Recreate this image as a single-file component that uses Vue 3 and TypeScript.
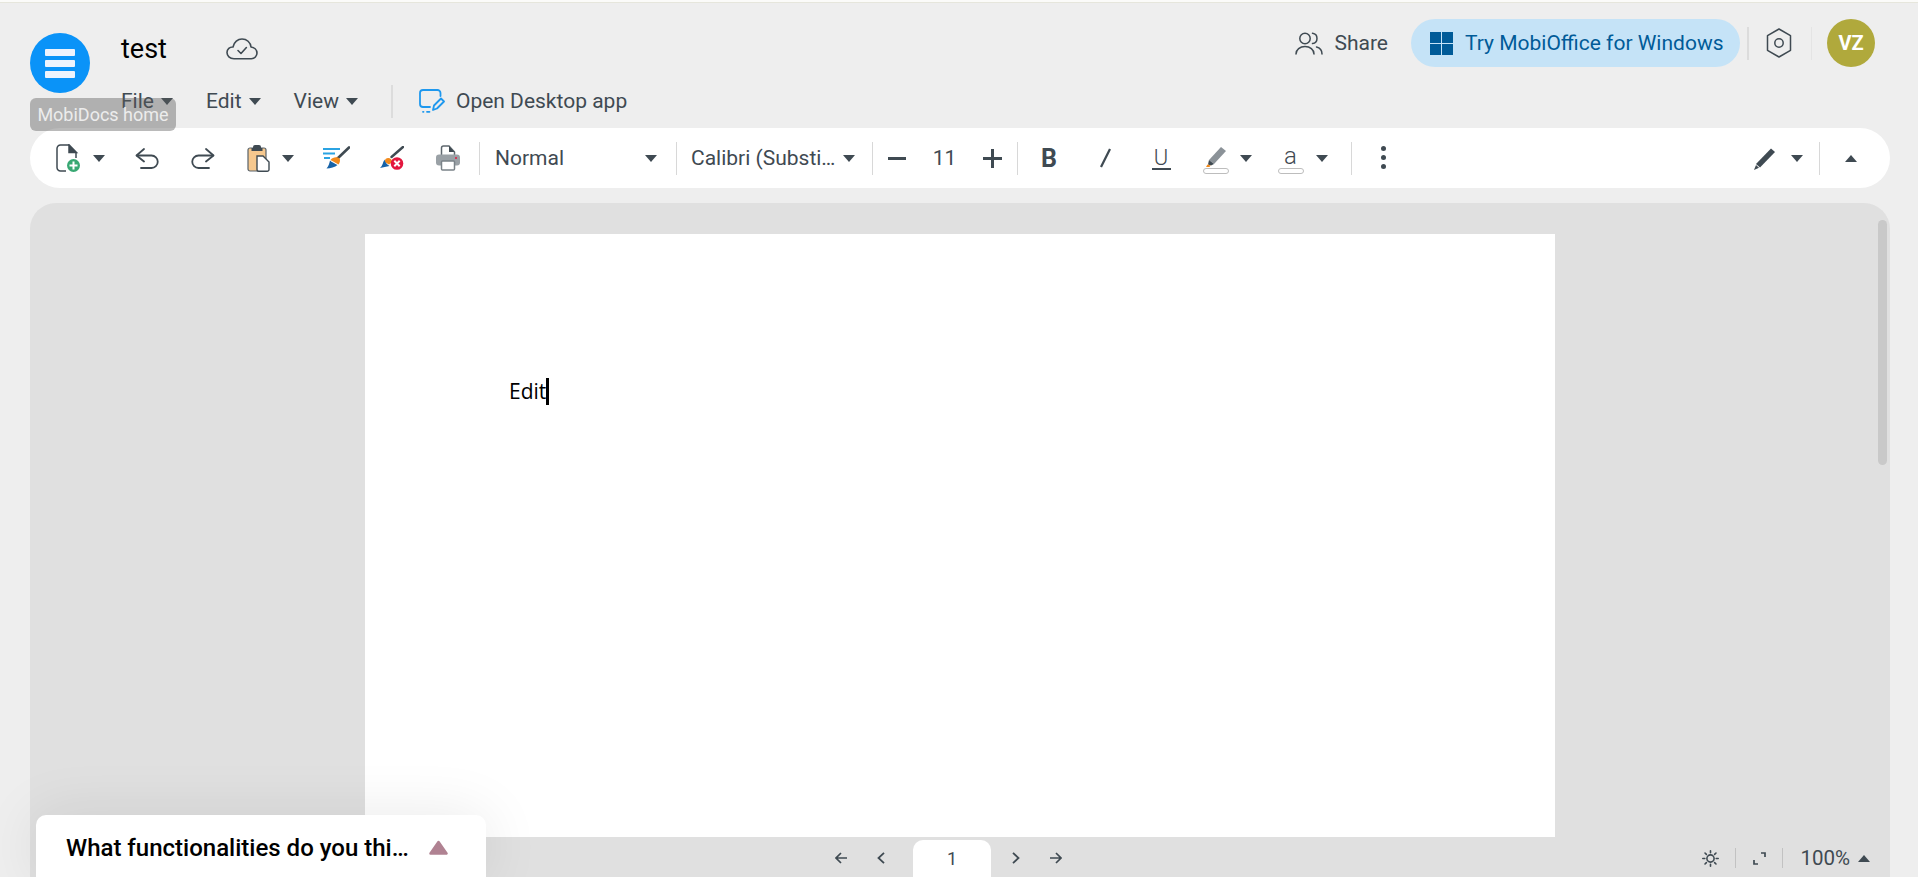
<script setup lang="ts">
const menus = ['File', 'Edit', 'View'];
</script>

<template>
  <div class="app">
    <div class="topline"></div>
    <div class="main">
      <header class="header">
        <button class="logo">
          <span></span><span></span><span></span>
        </button>
        <div class="tooltip">MobiDocs home</div>

        <div class="doc-info">
          <div class="title-row">
            <span class="title">test</span>
            <svg width="32" height="22" viewBox="0 0 32 22" fill="none" stroke="#3f4a52" stroke-width="1.6" stroke-linejoin="round" stroke-linecap="round">
              <path d="M8 20.7C3.7 20.7 1 17.8 1 14.6 1 11.2 3.8 8.7 7 9 8 4.2 11.8 1 16 1c4.8 0 8.5 3.4 9 8 3.5.4 6 3 6 6.1 0 3-2.4 5.6-5.6 5.6z" />
              <path d="M12 12.5l3 3 5.4-6" />
            </svg>
          </div>
          <nav class="menu-row">
            <span v-for="m in menus" :key="m" class="menu">{{ m }}<i class="caret"></i></span>
            <span class="menu-sep"></span>
            <svg class="open-icon" width="26" height="24" viewBox="0 0 26 24" fill="none" stroke="#1e98ee" stroke-width="1.8" stroke-linecap="round" stroke-linejoin="round">
              <path d="M21.5 7V4a3 3 0 0 0-3-3H4a3 3 0 0 0-3 3v11a3 3 0 0 0 3 3h7" />
              <path d="M14 21l1-4.500 7-7 3 3-7 7z" />
              <path d="M8 22.800h2.500M4 22.800h.5" />
            </svg>
            <span class="open-label">Open Desktop app</span>
          </nav>
        </div>

        <div class="header-right">
          <svg width="28" height="23" viewBox="0 0 28 23" fill="none" stroke="#3f4a52" stroke-width="1.5" stroke-linecap="round">
            <circle cx="10" cy="6.500" r="5.200" />
            <path d="M1 22c0-4.500 4-7.500 9-7.500s9 3 9 7.500" />
            <path d="M17.500 1.300a5.200 5.200 0 0 1 0 10.300" />
            <path d="M21.500 15c3.300.8 5.500 3.500 5.500 7" />
          </svg>
          <span class="share">Share</span>
          <button class="try-pill">
            <span class="win"><i></i><i></i><i></i><i></i></span>
            Try MobiOffice for Windows
          </button>
          <span class="head-sep"></span>
          <svg class="hex" width="26" height="30" viewBox="0 0 26 30" fill="none" stroke="#3f4a52" stroke-width="1.500" stroke-linejoin="round">
            <path d="M13 1l11.500 6.700v14.600L13 29 1.500 22.300V7.700z" />
            <circle cx="13" cy="15" r="4.200" />
          </svg>
          <span class="head-sep light"></span>
          <span class="avatar">VZ</span>
        </div>
      </header>

      <div class="toolbar">
        <span class="tool w48 first">
          <svg width="24" height="28" viewBox="0 0 24 28" fill="none" stroke="#3f4a52" stroke-width="1.500">
            <path d="M13 1H4.500A3.500 3.500 0 0 0 1 4.500v19A3.500 3.500 0 0 0 4.500 27H10" />
            <path d="M20 8.500V14" />
            <path d="M13 .8l7.500 7.700H13z" fill="#3f4a52" />
            <circle cx="17.500" cy="21.500" r="6.500" fill="#38a873" stroke="none" />
            <path d="M17.500 17.500v8M13.500 21.500h8" stroke="#fff" stroke-width="2" />
          </svg>
        </span>
        <i class="caret c-new"></i>
        <span class="tool">
          <svg width="24" height="21" viewBox="0 0 24 21" fill="none" stroke="#3f4a52" stroke-width="1.800" stroke-linecap="round" stroke-linejoin="round">
            <path d="M9 1L1.500 7.500 9 13.500" />
            <path d="M2 7.500h14.500a6.200 6.200 0 0 1 0 12.500H6" />
          </svg>
        </span>
        <span class="tool">
          <svg width="24" height="21" viewBox="0 0 24 21" fill="none" stroke="#3f4a52" stroke-width="1.800" stroke-linecap="round" stroke-linejoin="round">
            <path d="M15 1l7.500 6.500L15 13.500" />
            <path d="M22 7.500H7.500a6.200 6.200 0 0 0 0 12.500H18" />
          </svg>
        </span>
        <span class="tool w48 paste">
          <svg width="23" height="28" viewBox="0 0 23 28">
            <path d="M3 4h14a2 2 0 0 1 2 2v19a2 2 0 0 1-2 2H3a2 2 0 0 1-2-2V6a2 2 0 0 1 2-2z" fill="#f6c88e" stroke="#59636a" stroke-width="1.200" />
            <path d="M6 3a2 2 0 0 1 2-2h4a2 2 0 0 1 2 2v1h1.500v3h-11V4H6z" fill="#3f4a52" />
            <path d="M10 12h6l6 6v7.500a1.800 1.800 0 0 1-1.800 1.800H11.800a1.800 1.800 0 0 1-1.800-1.800z" fill="#fff" stroke="#3f4a52" stroke-width="1.400" />
          </svg>
        </span>
        <i class="caret"></i>
        <span class="tool painter">
          <svg width="27" height="24" viewBox="0 0 27 24" fill="none">
            <path d="M0 3h17M0 7.500h12M1 12h6" stroke="#2ba3e2" stroke-width="1.800" />
            <path d="M26 1.500L14.500 12.500" stroke="#3f4a52" stroke-width="2.600" stroke-linecap="round" />
            <path d="M7.500 14c2-3 7-3.500 9-1.500 1 1.500.5 4-1 6z" fill="#f28a1c" />
            <path d="M7 14.500c1.500 1.500 5 3 7.500 4.500-2.500 2-7 3.500-11 3.500 2-2 3-5.500 3.500-8z" fill="#1763a8" />
          </svg>
        </span>
        <span class="tool">
          <svg width="24" height="24" viewBox="0 0 24 24" fill="none">
            <path d="M23 1L11.500 11" stroke="#3f4a52" stroke-width="2.400" stroke-linecap="round" />
            <path d="M5.500 13c3-2 6.500-.5 6.500 3l-3 2.500-4.500-2.500z" fill="#f28a1c" />
            <path d="M4.500 13.500c.5 3 2.500 5 5 6.500L0 22c2.500-2 3-6 4.500-8.500z" fill="#1763a8" />
            <circle cx="17" cy="17.500" r="6.300" fill="#e3173e" />
            <path d="M14.300 14.800l5.400 5.400M19.700 14.800l-5.400 5.400" stroke="#fff" stroke-width="2" />
          </svg>
        </span>
        <span class="tool">
          <svg width="24" height="26" viewBox="0 0 24 26" fill="none">
            <path d="M5.500 10V3a2 2 0 0 1 2-2H13l5.500 6v3" stroke="#5e676e" stroke-width="1.500" />
            <path d="M13 1l5.500 6H13z" fill="#3f4a52" />
            <rect y="9.500" width="24" height="11" rx="3" fill="#9aa1a6" />
            <circle cx="20" cy="13" r="1" fill="#e3173e" />
            <rect x="5.500" y="16" width="13" height="9" rx="1" fill="#fff" stroke="#7a8288" stroke-width="1.500" />
          </svg>
        </span>
        <span class="tb-sep s-print"></span>
        <span class="select s-normal"><span>Normal</span><i class="caret"></i></span>
        <span class="tb-sep s-gap"></span>
        <span class="select s-font"><span>Calibri (Substi…</span><i class="caret"></i></span>
        <span class="tb-sep s-font-sep"></span>
        <span class="stepper">
          <i class="minus"></i>
          <span class="size">11</span>
          <i class="plus"></i>
        </span>
        <span class="tb-sep s-step"></span>
        <span class="tool bold">B</span>
        <span class="tool">
          <svg width="13" height="20" viewBox="0 0 13 20"><path d="M11 1L2 19" stroke="#3f4a52" stroke-width="2.200" /></svg>
        </span>
        <span class="tool"><span class="under">U</span></span>
        <span class="swatch-tool hl">
          <svg width="22" height="22" viewBox="0 0 22 22">
            <path d="M16 1l5 4L9 18l-5-4z" fill="#8b9298" />
            <path d="M4 14l5 4-3 1.500-3-1z" fill="#3f4a52" />
            <path d="M2.500 18.500l3 1-1 1.500H1z" fill="#f28a1c" />
          </svg>
          <i class="swatch"></i>
        </span>
        <i class="caret c-hl"></i>
        <span class="swatch-tool txt">
          <span class="a-glyph">a</span>
          <i class="swatch"></i>
        </span>
        <i class="caret c-a"></i>
        <span class="tb-sep s-a"></span>
        <span class="dots"><i></i><i></i><i></i></span>
        <span class="spacer"></span>
        <svg width="22" height="23" viewBox="0 0 22 23">
          <path d="M17 1.500l4 3.500L6 20.500 2 17z" fill="#3f4a52" />
          <path d="M2 18l3 2.800L0 23z" fill="#3f4a52" />
        </svg>
        <i class="caret c-pen"></i>
        <span class="tb-sep s-pen"></span>
        <i class="caret up c-up"></i>
      </div>

      <section class="panel">
        <div class="page">
          <span class="page-text">Edit</span><i class="text-cursor"></i>
        </div>
        <div class="status">
          <svg class="pg-arrow" width="12" height="12" viewBox="0 0 12 12" fill="none" stroke="#3f4a52" stroke-width="1.700">
            <path d="M12 6H1M6 1L1 6l5 5" />
          </svg>
          <svg class="pg-prev" width="8" height="12" viewBox="0 0 8 12" fill="none" stroke="#3f4a52" stroke-width="1.800">
            <path d="M7 .8L1.500 6 7 11.200" />
          </svg>
          <span class="pg-input">1</span>
          <svg class="pg-next" width="8" height="12" viewBox="0 0 8 12" fill="none" stroke="#3f4a52" stroke-width="1.800">
            <path d="M1 .8L6.500 6 1 11.200" />
          </svg>
          <svg class="pg-last" width="12" height="12" viewBox="0 0 12 12" fill="none" stroke="#3f4a52" stroke-width="1.700">
            <path d="M0 6h11M6 1l5 5-5 5" />
          </svg>

          <div class="status-right">
            <svg width="17" height="17" viewBox="0 0 17 17" fill="none" stroke="#3f4a52" stroke-width="1.600" stroke-linecap="round">
              <circle cx="8.500" cy="8.500" r="3.600" />
              <path d="M8.500 0.800v2M8.500 14.200v2M.8 8.500h2M14.200 8.500h2M3 3l1.400 1.400M12.600 12.600L14 14M3 14l1.400-1.400M12.600 4.400L14 3" />
            </svg>
            <span class="st-sep"></span>
            <svg width="13" height="13" viewBox="0 0 13 13" fill="none" stroke="#3f4a52" stroke-width="1.700">
              <path d="M8 1h4v4M1 8v4h4" />
            </svg>
            <span class="st-sep"></span>
            <span class="zoom-val">100%</span>
            <i class="caret up"></i>
          </div>
        </div>
        <div class="scrollbar"></div>
      </section>
    </div>

    <div class="feedback">
      <span>What functionalities do you thi…</span>
      <svg width="19" height="15" viewBox="0 0 19 15">
        <path d="M9.500 2L17.500 13.500H1.500z" fill="#b08292" stroke="#b08292" stroke-width="2.500" stroke-linejoin="round" />
      </svg>
    </div>
  </div>
</template>

<style scoped>
.app {
  position: relative;
  height: 877px;
  overflow: hidden;
  background: #eeeeee;
  font-family: Roboto, "Liberation Sans", sans-serif;
  font-size: 21px;
  color: #3f4a52;
}
.topline {
  height: 3px;
  background: #fbfbf9;
  border-bottom: 1px solid #e6e6dc;
  box-sizing: border-box;
}
.main {
  display: flex;
  flex-direction: column;
  height: 874px;
  padding: 0 28px 0 30px;
}
.caret {
  display: inline-block;
  width: 0;
  height: 0;
  flex: none;
  border-left: 6px solid transparent;
  border-right: 6px solid transparent;
  border-top: 7px solid #3f4a52;
}
.caret.up {
  border-top: 0;
  border-bottom: 7px solid #3f4a52;
}

/* header */
.header {
  position: relative;
  display: flex;
  height: 125px;
}
.logo {
  display: flex;
  flex-direction: column;
  justify-content: center;
  align-items: center;
  gap: 4px;
  width: 60px;
  height: 60px;
  margin-top: 30px;
  padding: 0;
  border: 0;
  border-radius: 50%;
  background: #0a93f8;
}
.logo span {
  width: 30px;
  height: 7px;
  border-radius: 1px;
  background: #eef3fd;
}
.tooltip {
  position: absolute;
  z-index: 5;
  left: 0;
  top: 95px;
  width: 146px;
  height: 33px;
  line-height: 33px;
  text-align: center;
  font-size: 18px;
  border-radius: 6px;
  color: #ececec;
  background: rgba(90, 90, 90, 0.42);
}
.doc-info {
  margin-left: 31px;
  padding-top: 31px;
}
.title-row {
  display: flex;
  align-items: center;
  height: 30px;
}
.title {
  font-size: 27px;
  color: #000;
  width: 105px;
}
.menu-row {
  display: flex;
  align-items: center;
  height: 34px;
  margin-top: 20px;
}
.menu {
  display: flex;
  align-items: center;
  gap: 7px;
  margin-right: 33px;
}
.menu-sep {
  width: 2px;
  height: 33px;
  margin: 0 26px 0 0;
  background: #dcdcdc;
}
.open-label {
  margin-left: 11px;
}
.header-right {
  display: flex;
  align-items: center;
  height: 48px;
  margin: 16px 0 0 auto;
  padding-right: 15px;
}
.share {
  margin: 0 23px 0 11px;
}
.try-pill {
  display: flex;
  align-items: center;
  gap: 12px;
  width: 329px;
  height: 48px;
  padding: 0 0 0 19px;
  border: 0;
  border-radius: 24px;
  background: #c5e3f7;
  color: #005b98;
  font: inherit;
}
.win {
  display: grid;
  grid-template-columns: 11px 11px;
  grid-auto-rows: 11px;
  gap: 1px;
}
.win i {
  background: #005b98;
}
.head-sep {
  width: 2px;
  height: 33px;
  margin: 0 0 0 7px;
  background: #dcdcdc;
}
.head-sep.light {
  width: 1px;
  margin-left: 19px;
  background: #e4e4e4;
}
.hex {
  margin-left: 17px;
}
.avatar {
  display: flex;
  align-items: center;
  justify-content: center;
  width: 48px;
  height: 48px;
  margin-left: 15px;
  border-radius: 50%;
  background: #b0a93c;
  color: #fff;
  font-weight: 700;
  font-size: 20px;
}

/* toolbar */
.toolbar {
  display: flex;
  align-items: center;
  flex: none;
  height: 60px;
  padding: 0 33px 0 14px;
  border-radius: 30px;
  background: #fff;
}
.tool {
  display: flex;
  align-items: center;
  justify-content: center;
  flex: none;
  width: 56px;
  height: 34px;
}
.tool.w48 {
  width: 48px;
}
.c-new {
  margin: 0 14px 0 1px;
}
.paste {
  margin-left: 3px;
}
.painter {
  margin-left: 14px;
}
.tb-sep {
  flex: none;
  width: 1px;
  height: 33px;
  background: #d8d8d8;
}
.s-print {
  margin-left: 3px;
}
.select {
  display: flex;
  align-items: center;
  justify-content: space-between;
  flex: none;
}
.s-normal {
  width: 162px;
  margin-left: 15px;
}
.s-gap {
  margin-left: 19px;
}
.s-font {
  width: 164px;
  margin-left: 14px;
}
.s-font-sep {
  margin-left: 17px;
}
.stepper {
  display: flex;
  align-items: center;
  justify-content: space-between;
  flex: none;
  width: 114px;
  margin-left: 15px;
}
.minus {
  width: 18px;
  height: 3px;
  background: #3f4a52;
}
.plus {
  position: relative;
  width: 19px;
  height: 3px;
  background: #3f4a52;
}
.plus::after {
  content: "";
  position: absolute;
  left: 8px;
  top: -8px;
  width: 3px;
  height: 19px;
  background: #3f4a52;
}
.s-step {
  margin-left: 15px;
}
.bold {
  margin-left: 3px;
  font-size: 25px;
  font-weight: 700;
}
.under {
  display: block;
  width: 19px;
  text-align: center;
  line-height: 21px;
  border-bottom: 2px solid #3f4a52;
  font-size: 22px;
  font-weight: 300;
}
.swatch-tool {
  display: flex;
  flex-direction: column;
  align-items: center;
  flex: none;
  width: 27px;
  margin-top: 3px;
}
.swatch {
  width: 26px;
  height: 6px;
  box-sizing: border-box;
  border: 1px solid #bdbdbd;
  border-radius: 3px;
  background: #fff;
}
.hl {
  margin-left: 13px;
}
.c-hl {
  margin-left: 11px;
}
.txt {
  margin-left: 25px;
}
.a-glyph {
  line-height: 20px;
  margin-bottom: 2px;
  font-size: 24px;
  font-weight: 300;
}
.c-a {
  margin-left: 12px;
}
.s-a {
  margin-left: 23px;
}
.dots {
  display: flex;
  flex-direction: column;
  gap: 4px;
  margin: -2px 0 0 29px;
}
.dots i {
  width: 5px;
  height: 5px;
  border-radius: 50%;
  background: #3f4a52;
}
.spacer {
  flex: 1;
}
.c-pen {
  margin-left: 15px;
}
.s-pen {
  margin-left: 16px;
}
.c-up {
  margin-left: 25px;
}

/* editor */
.panel {
  position: relative;
  display: flex;
  flex-direction: column;
  flex: 1;
  margin-top: 15px;
  padding-top: 31px;
  border-radius: 26px 26px 0 0;
  background: #e0e0e0;
}
.page {
  flex: none;
  box-sizing: border-box;
  width: 1190px;
  height: 603px;
  margin: 0 auto;
  padding: 144px 0 0 144px;
  background: #fff;
  color: #000;
  font-family: "Open Sans", "Liberation Sans", sans-serif;
  font-size: 21px;
  line-height: 27px;
}
.text-cursor {
  display: inline-block;
  width: 3px;
  height: 27px;
  vertical-align: top;
  background: #000;
}
.scrollbar {
  position: absolute;
  top: 17px;
  right: 3px;
  width: 9px;
  height: 245px;
  border-radius: 5px;
  background: #c9c9c9;
}
.status {
  display: flex;
  align-items: center;
  box-sizing: border-box;
  height: 40px;
  padding: 2px 20px 0 805px;
}
.pg-prev {
  margin-left: 30px;
}
.pg-input {
  align-self: flex-start;
  width: 78px;
  height: 37px;
  margin: 1px 0 0 28px;
  line-height: 37px;
  text-align: center;
  border-radius: 10px 10px 0 0;
  background: #fff;
  font-size: 18px;
}
.pg-next {
  margin-left: 21px;
}
.pg-last {
  margin-left: 30px;
}
.status-right {
  display: flex;
  align-items: center;
  margin-left: auto;
}
.st-sep {
  width: 1px;
  height: 20px;
  margin: 0 17px 0 16px;
  background: #c2c2c2;
}
.zoom-val {
  margin-right: 8px;
  font-size: 20.5px;
}

/* feedback card */
.feedback {
  position: absolute;
  left: 36px;
  top: 815px;
  display: flex;
  align-items: flex-start;
  gap: 20px;
  box-sizing: border-box;
  width: 450px;
  height: 62px;
  padding: 19px 0 0 30px;
  border-radius: 10px 10px 0 0;
  background: #fff;
  box-shadow: 0 0 60px rgba(0, 0, 0, 0.09);
  color: #000;
  font-size: 24px;
  font-weight: 500;
  line-height: 28px;
}
.feedback svg {
  margin-top: 6px;
}
</style>
